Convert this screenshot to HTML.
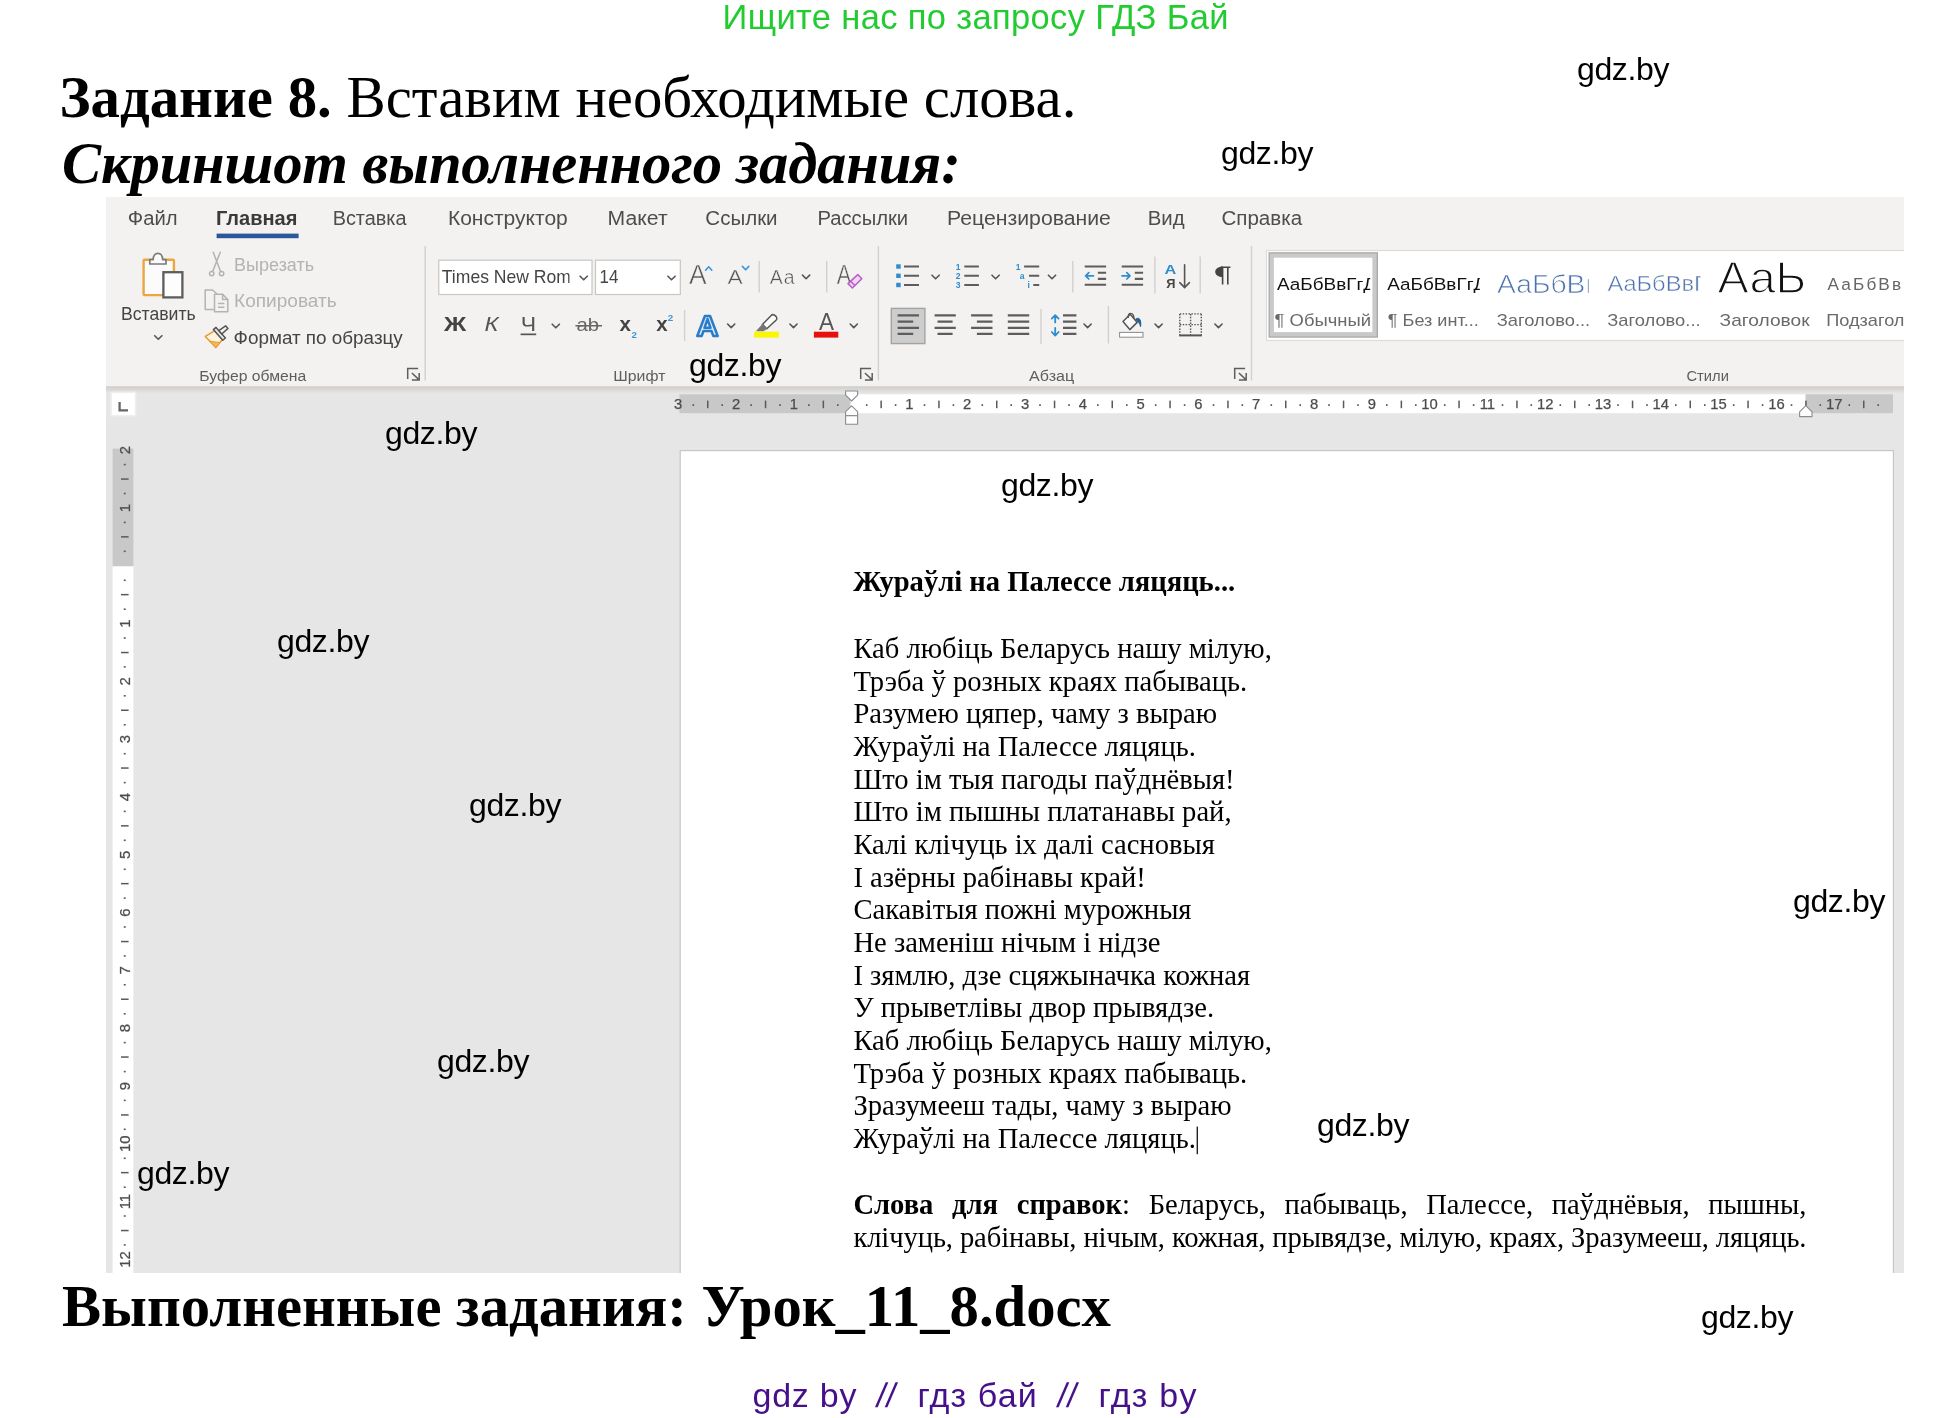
<!DOCTYPE html>
<html lang="ru">
<head>
<meta charset="utf-8">
<title>Задание 8</title>
<style>
html,body{margin:0;padding:0;background:#fff;}
body{width:1953px;height:1418px;position:relative;overflow:hidden;font-family:"Liberation Sans",sans-serif;}
.t{position:absolute;white-space:nowrap;line-height:1;margin:0;padding:0;}
.serif{font-family:"Liberation Serif",serif;}
.sans{font-family:"Liberation Sans",sans-serif;}
.wm{position:absolute;white-space:nowrap;line-height:1;font-family:"Liberation Sans",sans-serif;font-size:32px;letter-spacing:-0.36px;color:#000;margin-top:0.4px;}
#word{position:absolute;left:106px;top:197px;width:1798px;height:1076px;background:#e6e6e6;overflow:hidden;filter:blur(0.6px);}
#wsvg{position:absolute;left:0;top:0;width:1798px;height:1076px;}
#wsvg text{font-family:"Liberation Sans",sans-serif;}
.doc{position:absolute;font-family:"Liberation Serif",serif;font-size:28.6px;line-height:32.75px;color:#000;white-space:nowrap;}
</style>
</head>
<body>
<div id="outer" style="position:absolute;left:0;top:0;width:1953px;height:1418px;opacity:0.999;">
<div class="t sans" id="hdr" style="left:722.5px;top:-0.5px;font-size:34.5px;letter-spacing:0.35px;color:#22cb30;">Ищите нас по запросу ГДЗ Бай</div>
<div class="t serif" id="l1" style="left:59.5px;top:68.5px;font-size:58.8px;color:#000;"><b>Задание 8.</b> Вставим необходимые слова.</div>
<div class="t serif" id="l2" style="left:62px;top:135.3px;font-size:58.67px;letter-spacing:-0.17px;color:#000;font-weight:bold;font-style:italic;">Скриншот выполненного задания:</div>
<div class="t serif" id="l3" style="left:62px;top:1278.2px;font-size:58.67px;color:#000;font-weight:bold;">Выполненные задания: Урок_11_8.docx</div>
<div class="t sans" id="f1" style="left:752.5px;top:1377.7px;font-size:34px;letter-spacing:0.75px;color:#45108a;">gdz by</div>
<div class="t sans" id="f2" style="left:876.6px;top:1377.7px;font-size:34px;letter-spacing:0.3px;transform:skewX(-9deg);color:#45108a;">//</div>
<div class="t sans" id="f3" style="left:917.5px;top:1377.7px;font-size:34px;letter-spacing:1.15px;color:#45108a;">гдз бай</div>
<div class="t sans" id="f4" style="left:1057.7px;top:1377.7px;font-size:34px;letter-spacing:0.3px;transform:skewX(-9deg);color:#45108a;">//</div>
<div class="t sans" id="f5" style="left:1098.5px;top:1377.7px;font-size:34px;letter-spacing:1.28px;color:#45108a;">гдз by</div>
</div><!--outer-->
<div id="word">
<svg id="wsvg" viewBox="106 197 1798 1076" width="1798" height="1076">
<defs>
  <linearGradient id="shd" x1="0" y1="0" x2="0" y2="1"><stop offset="0" stop-color="#cfcdcb"/><stop offset="1" stop-color="#e6e6e6"/></linearGradient>
  <clipPath id="clipfont"><rect x="440" y="262" width="129.6" height="32"/></clipPath>
  <clipPath id="clipgal"><rect x="1266" y="249" width="638" height="93"/></clipPath>
  <path id="chev" d="M-3.6,-1.8 L0,1.8 L3.6,-1.8" fill="none" stroke="#555" stroke-width="1.6" stroke-linecap="round" stroke-linejoin="round"/>
  <g id="launch" fill="none" stroke="#5e5e5e" stroke-width="1.5"><path d="M0.8,11.4 V0.8 H11.2"/><path d="M5,5.4 L12,12 M12.3,5.4 V12.3 H5"/></g>
</defs>
<!-- backgrounds -->
<rect x="106" y="197" width="1798" height="1076" fill="#e6e6e6"/>
<rect x="106" y="197" width="1798" height="189.5" fill="#f3f2f1"/>
<rect x="106" y="386.3" width="1798" height="7" fill="url(#shd)"/>

<!-- tabs -->
<g font-size="20" fill="#4d4d4d">
<text x="127.8" y="225" textLength="49.8" lengthAdjust="spacingAndGlyphs">Файл</text>
<text x="216" y="225" textLength="81.4" lengthAdjust="spacingAndGlyphs" font-weight="bold" fill="#3a3a3a">Главная</text>
<text x="332.7" y="225" textLength="73.8" lengthAdjust="spacingAndGlyphs">Вставка</text>
<text x="447.9" y="225" textLength="119.9" lengthAdjust="spacingAndGlyphs">Конструктор</text>
<text x="607.6" y="225" textLength="60" lengthAdjust="spacingAndGlyphs">Макет</text>
<text x="705.3" y="225" textLength="72.3" lengthAdjust="spacingAndGlyphs">Ссылки</text>
<text x="817.4" y="225" textLength="90.7" lengthAdjust="spacingAndGlyphs">Рассылки</text>
<text x="947.1" y="225" textLength="163.8" lengthAdjust="spacingAndGlyphs">Рецензирование</text>
<text x="1147.7" y="225" textLength="36.9" lengthAdjust="spacingAndGlyphs">Вид</text>
<text x="1221.4" y="225" textLength="80.7" lengthAdjust="spacingAndGlyphs">Справка</text>
</g>
<rect x="216.6" y="233.6" width="82" height="4.6" fill="#2b579a"/>

<!-- group separators -->
<g stroke="#d2d0ce" stroke-width="1.4">
<line x1="425.2" y1="246" x2="425.2" y2="380.5"/>
<line x1="878.4" y1="246" x2="878.4" y2="380.5"/>
<line x1="1251.5" y1="246" x2="1251.5" y2="380.5"/>
<line x1="684.6" y1="310" x2="684.6" y2="341"/>
<line x1="759.2" y1="261" x2="759.2" y2="292.5"/>
<line x1="826.7" y1="261" x2="826.7" y2="292.5"/>
<line x1="1072.8" y1="261" x2="1072.8" y2="292.5"/>
<line x1="1154.9" y1="256.5" x2="1154.9" y2="293.5"/>
<line x1="1200.2" y1="256.5" x2="1200.2" y2="293.5"/>
<line x1="1041" y1="309" x2="1041" y2="344"/>
<line x1="1108.4" y1="306" x2="1108.4" y2="343.5"/>
</g>

<!-- clipboard group text -->
<text x="121" y="319.5" font-size="17.5" fill="#444" textLength="74.7" lengthAdjust="spacingAndGlyphs">Вставить</text>
<use href="#chev" x="158.3" y="337.5"/>
<text x="234.1" y="271.1" font-size="17.5" fill="#b3b3b3" textLength="80" lengthAdjust="spacingAndGlyphs">Вырезать</text>
<text x="234.1" y="307.3" font-size="17.5" fill="#b3b3b3" textLength="102.6" lengthAdjust="spacingAndGlyphs">Копировать</text>
<text x="233.6" y="344.4" font-size="17.5" fill="#444" textLength="169.2" lengthAdjust="spacingAndGlyphs">Формат по образцу</text>
<g font-size="14.7" fill="#5e5e5e">
<text x="199.3" y="380.6" textLength="106.9" lengthAdjust="spacingAndGlyphs">Буфер обмена</text>
<text x="613.3" y="380.6" textLength="52.1" lengthAdjust="spacingAndGlyphs">Шрифт</text>
<text x="1029.1" y="380.6" textLength="45.1" lengthAdjust="spacingAndGlyphs">Абзац</text>
<text x="1686.4" y="380.6" textLength="42.5" lengthAdjust="spacingAndGlyphs">Стили</text>
</g>
<use href="#launch" x="406.9" y="367.6"/>
<use href="#launch" x="859.9" y="367.6"/>
<use href="#launch" x="1233.9" y="367.6"/>

<!-- font boxes -->
<rect x="438.8" y="260.2" width="153.2" height="34.3" fill="#fff" stroke="#c8c6c4" stroke-width="1.2"/>
<rect x="595.5" y="260.2" width="84.8" height="34.3" fill="#fff" stroke="#c8c6c4" stroke-width="1.2"/>
<g clip-path="url(#clipfont)"><text x="441.8" y="283.4" font-size="19" fill="#444" textLength="129" lengthAdjust="spacingAndGlyphs">Times New Rom</text></g>
<text x="599.6" y="283.4" font-size="19" fill="#444" textLength="18.8" lengthAdjust="spacingAndGlyphs">14</text>
<use href="#chev" x="583.7" y="278"/>
<use href="#chev" x="671.5" y="278"/>
<!-- ===== clipboard icons ===== -->
<g>
  <!-- paste -->
  <rect x="143.6" y="259.8" width="30.3" height="35.3" rx="1" fill="#fbfbfb" stroke="#eda541" stroke-width="2.4"/>
  <path d="M149.8,264 V259.6 H153.2 C153.2,251.2 162.6,251.2 162.6,259.6 H166 V264 Z" fill="#fafafa" stroke="#7a7a7a" stroke-width="1.7" stroke-linejoin="round"/>
  <rect x="163.4" y="272.2" width="19" height="25.2" fill="#fdfdfd" stroke="#5d5d5d" stroke-width="2.3"/>
  <!-- scissors -->
  <g fill="none" stroke="#b3b3b3" stroke-width="1.5" stroke-linecap="round">
    <path d="M213.2,252.2 L220.6,271.6 M220.3,252.2 L212.6,271.6"/>
    <circle cx="211.7" cy="273.6" r="2.2"/><circle cx="221.6" cy="273.6" r="2.2"/>
  </g>
  <!-- copy -->
  <g fill="#f3f2f1" stroke="#b3b3b3" stroke-width="1.5" stroke-linejoin="round">
    <path d="M205.2,290 H212.5 L216.5,293.5 V309.4 H205.2 Z"/>
    <path d="M214.5,294.3 H222.6 L227.8,299.6 V311.8 H214.5 Z"/>
    <path d="M222.6,294.3 V299.6 H227.8" fill="none"/>
    <path d="M218,303.6 H224.4 M218,307.2 H224.4" fill="none"/>
  </g>
  <!-- format painter -->
  <g stroke-linejoin="round">
    <path d="M205.3,336.4 L214.6,330.8 L222.4,339.6 L215.8,347.6 Z" fill="#fdf3e1" stroke="#e99a2c" stroke-width="1.5"/>
    <path d="M209.6,341.2 L220,342.6 L215.8,347.6 Z" fill="#f4b95e" stroke="#e99a2c" stroke-width="1"/>
    <path d="M213.4,329.6 L216,327.4 L225.4,338 L222.8,340.2 Z" fill="#e8e8e8" stroke="#555" stroke-width="1.5"/>
    <path d="M218.8,330.6 L225.6,325.8 L228,328.4 L221.8,334 Z" fill="#f3f2f1" stroke="#555" stroke-width="1.5"/>
  </g>
</g>

<!-- ===== font group row 1 ===== -->
<g fill="#555" stroke="#f3f2f1" stroke-width="0.45">
  <text x="689" y="284" font-size="27" textLength="17.6" lengthAdjust="spacingAndGlyphs">A</text>
  <text x="727.5" y="284" font-size="20.5" textLength="15.2" lengthAdjust="spacingAndGlyphs">A</text>
  <text x="769.8" y="284" font-size="19.6" textLength="25.8" lengthAdjust="spacingAndGlyphs" letter-spacing="1">Aa</text>
  <text x="836.8" y="284" font-size="27" textLength="14.6" lengthAdjust="spacingAndGlyphs">A</text>
</g>
<path d="M705.6,270.2 L708.7,266.8 L711.8,270.2" fill="none" stroke="#3a96dd" stroke-width="1.6" stroke-linecap="round" stroke-linejoin="round"/>
<path d="M742.4,266.4 L745.6,269.8 L748.8,266.4" fill="none" stroke="#3a96dd" stroke-width="1.6" stroke-linecap="round" stroke-linejoin="round"/>
<use href="#chev" x="806.1" y="276.9"/>
<path d="M857.8,274.6 L861.8,278.8 L852.4,288 L848,283.6 Z" fill="#f1d5f7" stroke="#b65fc7" stroke-width="1.5" stroke-linejoin="round"/>
<path d="M850.6,281.2 L854.9,285.5" stroke="#b65fc7" stroke-width="1.5"/>

<!-- ===== font group row 2 ===== -->
<g fill="#444">
  <text x="444" y="331" font-size="20.5" font-weight="bold" textLength="22.2" lengthAdjust="spacingAndGlyphs">Ж</text>
  <text x="484.6" y="331" font-size="20.5" font-style="italic" textLength="14" lengthAdjust="spacingAndGlyphs" fill="#555">К</text>
  <text x="520.8" y="331" font-size="20.5" textLength="15.4" lengthAdjust="spacingAndGlyphs" fill="#555">Ч</text>
  <text x="576.4" y="331" font-size="19" textLength="22.6" lengthAdjust="spacingAndGlyphs" fill="#666">ab</text>
  <text x="619.6" y="331" font-size="20" font-weight="bold" textLength="11.4" lengthAdjust="spacingAndGlyphs">x</text>
  <text x="656.2" y="331" font-size="20" font-weight="bold" textLength="11.4" lengthAdjust="spacingAndGlyphs">x</text>
  <text x="631.4" y="337.6" font-size="9.8" font-weight="bold" fill="#3a96dd">2</text>
  <text x="667.8" y="320.6" font-size="9.8" font-weight="bold" fill="#3a96dd">2</text>
</g>
<rect x="520.6" y="333.5" width="15.6" height="1.7" fill="#555"/>
<rect x="575.4" y="325" width="26.6" height="1.5" fill="#666"/>
<use href="#chev" x="555.8" y="326"/>
<!-- text effects A -->
<text x="696.6" y="335.6" font-size="29.5" font-weight="bold" fill="#dcebf9" stroke="#2a7bc8" stroke-width="2.4" textLength="22" lengthAdjust="spacingAndGlyphs" stroke-linejoin="round">A</text>
<use href="#chev" x="731.2" y="325.8"/>
<!-- highlighter -->
<g stroke-linejoin="round">
  <path d="M762.4,324.4 L771.2,315.4 C773.6,313 778.6,317.6 776.2,320 L766.8,328.8 Z" fill="#fcfcfc" stroke="#555" stroke-width="1.5"/>
  <path d="M762.4,324.4 L766.8,328.8 L763.4,330.9 L756.6,330.9 Z" fill="#767676" stroke="#767676" stroke-width="0.8"/>
</g>
<rect x="754.1" y="331.7" width="24.8" height="5.9" fill="#faf500"/>
<use href="#chev" x="793.5" y="325.8"/>
<!-- font color -->
<text x="819" y="330.2" font-size="23.8" fill="#555" textLength="15" lengthAdjust="spacingAndGlyphs">A</text>
<rect x="813.9" y="331.7" width="24.4" height="5.9" fill="#e80f0f"/>
<use href="#chev" x="853.8" y="325.8"/>

<!-- ===== paragraph row 1 ===== -->
<g stroke="#5f5d5b" stroke-width="2.1">
  <path d="M904,266.5 H919 M904,275.8 H919 M904,285 H919"/>
  <path d="M964.3,266.5 H978.9 M964.3,275.8 H978.9 M964.3,285 H978.9"/>
  <path d="M1024.1,266.5 H1039.2 M1029,275.8 H1039.2 M1033.3,285 H1039.2"/>
  <path d="M1084.7,266.5 H1106.1 M1097.9,272.7 H1106.1 M1097.9,278.9 H1106.1 M1084.7,284.8 H1106.1"/>
  <path d="M1121.7,266.5 H1143.1 M1134.8,272.7 H1143.1 M1134.8,278.9 H1143.1 M1121.7,284.8 H1143.1"/>
</g>
<g fill="#2f8ccd">
  <rect x="896.2" y="264.3" width="4.5" height="4.4"/><rect x="896.2" y="273.6" width="4.5" height="4.4"/><rect x="896.2" y="282.8" width="4.5" height="4.4"/>
</g>
<g fill="#2f8ccd" font-weight="bold" font-size="8.6">
  <text x="955.8" y="269.6">1</text><text x="955.8" y="278.9">2</text><text x="955.8" y="288.2">3</text>
  <text x="1015.8" y="269.6">1</text><text x="1019.8" y="278.9">a</text><text x="1027.6" y="288.2">i</text>
</g>
<use href="#chev" x="935.6" y="277"/>
<use href="#chev" x="995.6" y="277"/>
<use href="#chev" x="1052" y="277"/>
<g fill="none" stroke="#2f8ccd" stroke-width="1.7" stroke-linecap="round" stroke-linejoin="round">
  <path d="M1093.4,275.8 H1085.6 M1088.8,272.6 L1085.6,275.8 L1088.8,279"/>
  <path d="M1122,275.8 H1130 M1126.8,272.6 L1130,275.8 L1126.8,279"/>
</g>
<!-- sort -->
<text x="1164.4" y="274.3" font-size="13.6" font-weight="bold" fill="#2f8ccd" textLength="11.8" lengthAdjust="spacingAndGlyphs">A</text>
<text x="1166.2" y="288.4" font-size="12.8" font-weight="bold" fill="#444" textLength="9.2" lengthAdjust="spacingAndGlyphs">Я</text>
<path d="M1184.6,264.8 V287.4 M1179.8,282.6 L1184.6,287.6 L1189.4,282.6" fill="none" stroke="#555" stroke-width="1.6" stroke-linecap="round" stroke-linejoin="round"/>
<!-- pilcrow -->
<path d="M1223,266.6 C1212.6,266.6 1212.6,277.2 1223,277.2 Z" fill="#444"/>
<path d="M1222.6,266.6 V284.5 M1227.8,266.6 V284.5 M1221,267.3 H1230.4" fill="none" stroke="#444" stroke-width="1.6"/>

<!-- ===== paragraph row 2 ===== -->
<rect x="891.3" y="308.4" width="33.6" height="35.2" fill="#cdcdcd" stroke="#a3a3a3" stroke-width="1.4"/>
<g stroke="#5f5d5b" stroke-width="2.2">
  <path d="M897.6,315.4 H919 M897.6,321.7 H913.2 M897.6,327.8 H919 M897.6,333.9 H913.2"/>
  <path d="M934.6,315.4 H955.8 M937.5,321.7 H952.6 M934.6,327.8 H955.8 M937.5,333.9 H952.6"/>
  <path d="M971.1,315.4 H992.5 M976.9,321.7 H992.5 M971.1,327.8 H992.5 M976.9,333.9 H992.5"/>
  <path d="M1007.8,315.4 H1029.2 M1007.8,321.7 H1029.2 M1007.8,327.8 H1029.2 M1007.8,333.9 H1029.2"/>
  <path d="M1063,315.4 H1076.4 M1063,321.7 H1076.4 M1063,327.8 H1076.4 M1063,333.9 H1076.4"/>
</g>
<g fill="none" stroke="#2f8ccd" stroke-width="1.8" stroke-linecap="round" stroke-linejoin="round">
  <path d="M1055.2,315.4 V322.4 M1051.8,318.6 L1055.2,315.2 L1058.6,318.6"/>
  <path d="M1055.2,328 V335.4 M1051.8,332 L1055.2,335.6 L1058.6,332"/>
</g>
<use href="#chev" x="1087.6" y="325.8"/>
<!-- shading -->
<g stroke-linejoin="round">
  <path d="M1130.2,314.2 L1137.2,322.4 L1129.8,329.6 L1123,321.6 Z" fill="#fafafa" stroke="#555" stroke-width="1.5"/>
  <path d="M1128.2,318 C1127.6,311.8 1133.6,311.6 1134,318.6" fill="none" stroke="#555" stroke-width="1.4"/>
  <path d="M1135.6,319.2 C1139.6,316.4 1141.4,320.4 1140.6,326.6 C1139.6,323 1138.2,321.6 1135.6,319.2 Z" fill="#1f5f96" stroke="#1f5f96" stroke-width="1"/>
</g>
<rect x="1119.6" y="332.4" width="23.4" height="4.8" fill="#fff" stroke="#8a8a8a" stroke-width="1"/>
<use href="#chev" x="1158.6" y="325.8"/>
<!-- borders -->
<g fill="none" stroke="#555" stroke-width="1.4" stroke-dasharray="1.5 1.4">
  <path d="M1179.8,313.9 H1201.4 M1179.8,313.9 V335 M1201.3,313.9 V335 M1190.6,313.9 V335 M1179.8,324.6 H1201.4"/>
</g>
<path d="M1179.1,335.4 H1201.9" stroke="#555" stroke-width="2"/>
<use href="#chev" x="1218.5" y="325.8"/>
<!-- ===== styles gallery ===== -->
<rect x="1266.5" y="250.5" width="640" height="90" fill="#fff" stroke="#dcdcdc" stroke-width="1.2"/>
<rect x="1268.5" y="252.2" width="109.5" height="85.5" fill="#a9a9a9"/>
<rect x="1269.8" y="253.5" width="106.9" height="82.9" fill="#c9c9c9"/>
<rect x="1273.9" y="257.7" width="98.5" height="74.4" fill="#fff"/>
<g clip-path="url(#clipgal)">
  <clipPath id="cs1"><rect x="1272" y="260" width="98.2" height="40"/></clipPath>
  <clipPath id="cs2"><rect x="1384" y="260" width="95.8" height="40"/></clipPath>
  <clipPath id="cs3"><rect x="1494" y="255" width="94.6" height="45"/></clipPath>
  <clipPath id="cs4"><rect x="1604" y="255" width="96.4" height="45"/></clipPath>
  <g clip-path="url(#cs1)"><text x="1277" y="289.8" font-size="17.4" fill="#111" textLength="110.2" lengthAdjust="spacingAndGlyphs">АаБбВвГгДд</text></g>
  <g clip-path="url(#cs2)"><text x="1387.2" y="289.8" font-size="17.4" fill="#111" textLength="110.2" lengthAdjust="spacingAndGlyphs">АаБбВвГгДд</text></g>
  <g clip-path="url(#cs3)"><text x="1497" y="292.7" font-size="26.4" fill="#4d72ad" stroke="#fff" stroke-width="0.7" textLength="103.5" lengthAdjust="spacingAndGlyphs">АаБбВв</text></g>
  <g clip-path="url(#cs4)"><text x="1607.4" y="290.6" font-size="22" fill="#4d72ad" stroke="#fff" stroke-width="0.5" textLength="108" lengthAdjust="spacingAndGlyphs">АаБбВвГг</text></g>
  <text x="1717.6" y="293.2" font-size="43.6" fill="#111" stroke="#fff" stroke-width="1.3" textLength="88.6" lengthAdjust="spacingAndGlyphs">АаЬ</text>
  <text x="1827.6" y="289.8" font-size="17.2" fill="#666" letter-spacing="2.1">АаБбВвГг</text>
  <g font-size="16.6" fill="#6a6a6a">
    <text x="1274.6" y="326.2" textLength="96.4" lengthAdjust="spacingAndGlyphs">¶ Обычный</text>
    <text x="1387.8" y="326.2" textLength="91" lengthAdjust="spacingAndGlyphs">¶ Без инт...</text>
    <text x="1496.8" y="326.2" textLength="93.4" lengthAdjust="spacingAndGlyphs">Заголово...</text>
    <text x="1607.2" y="326.2" textLength="93.4" lengthAdjust="spacingAndGlyphs">Заголово...</text>
    <text x="1719.6" y="326.2" textLength="90" lengthAdjust="spacingAndGlyphs">Заголовок</text>
    <text x="1826.2" y="326.2" textLength="116" lengthAdjust="spacingAndGlyphs">Подзаголовок</text>
  </g>
</g>
<!-- ===== horizontal ruler ===== -->
<rect x="679.4" y="394.3" width="171.2" height="18.9" fill="#c8c8c8"/>
<rect x="850.6" y="394.3" width="955.0" height="18.9" fill="#fff"/>
<rect x="1805.6" y="394.3" width="87.4" height="18.9" fill="#c8c8c8"/>
<g fill="#5a5a5a">
<rect x="707.0" y="400.6" width="1.5" height="7.6"/>
<rect x="764.8" y="400.6" width="1.5" height="7.6"/>
<rect x="822.6" y="400.6" width="1.5" height="7.6"/>
<rect x="880.4" y="400.6" width="1.5" height="7.6"/>
<rect x="938.2" y="400.6" width="1.5" height="7.6"/>
<rect x="996.0" y="400.6" width="1.5" height="7.6"/>
<rect x="1053.8" y="400.6" width="1.5" height="7.6"/>
<rect x="1111.5" y="400.6" width="1.5" height="7.6"/>
<rect x="1169.3" y="400.6" width="1.5" height="7.6"/>
<rect x="1227.2" y="400.6" width="1.5" height="7.6"/>
<rect x="1285.0" y="400.6" width="1.5" height="7.6"/>
<rect x="1342.8" y="400.6" width="1.5" height="7.6"/>
<rect x="1400.6" y="400.6" width="1.5" height="7.6"/>
<rect x="1458.3" y="400.6" width="1.5" height="7.6"/>
<rect x="1516.2" y="400.6" width="1.5" height="7.6"/>
<rect x="1574.0" y="400.6" width="1.5" height="7.6"/>
<rect x="1631.8" y="400.6" width="1.5" height="7.6"/>
<rect x="1689.5" y="400.6" width="1.5" height="7.6"/>
<rect x="1747.3" y="400.6" width="1.5" height="7.6"/>
<rect x="1805.2" y="400.6" width="1.5" height="7.6"/>
<rect x="1863.0" y="400.6" width="1.5" height="7.6"/>
<rect x="692.5" y="404.2" width="1.6" height="1.8"/>
<rect x="721.4" y="404.2" width="1.6" height="1.8"/>
<rect x="750.3" y="404.2" width="1.6" height="1.8"/>
<rect x="779.2" y="404.2" width="1.6" height="1.8"/>
<rect x="808.1" y="404.2" width="1.6" height="1.8"/>
<rect x="837.0" y="404.2" width="1.6" height="1.8"/>
<rect x="865.9" y="404.2" width="1.6" height="1.8"/>
<rect x="894.8" y="404.2" width="1.6" height="1.8"/>
<rect x="923.7" y="404.2" width="1.6" height="1.8"/>
<rect x="952.6" y="404.2" width="1.6" height="1.8"/>
<rect x="981.5" y="404.2" width="1.6" height="1.8"/>
<rect x="1010.4" y="404.2" width="1.6" height="1.8"/>
<rect x="1039.2" y="404.2" width="1.6" height="1.8"/>
<rect x="1068.2" y="404.2" width="1.6" height="1.8"/>
<rect x="1097.0" y="404.2" width="1.6" height="1.8"/>
<rect x="1126.0" y="404.2" width="1.6" height="1.8"/>
<rect x="1154.9" y="404.2" width="1.6" height="1.8"/>
<rect x="1183.8" y="404.2" width="1.6" height="1.8"/>
<rect x="1212.7" y="404.2" width="1.6" height="1.8"/>
<rect x="1241.5" y="404.2" width="1.6" height="1.8"/>
<rect x="1270.5" y="404.2" width="1.6" height="1.8"/>
<rect x="1299.4" y="404.2" width="1.6" height="1.8"/>
<rect x="1328.2" y="404.2" width="1.6" height="1.8"/>
<rect x="1357.2" y="404.2" width="1.6" height="1.8"/>
<rect x="1386.0" y="404.2" width="1.6" height="1.8"/>
<rect x="1415.0" y="404.2" width="1.6" height="1.8"/>
<rect x="1443.9" y="404.2" width="1.6" height="1.8"/>
<rect x="1472.8" y="404.2" width="1.6" height="1.8"/>
<rect x="1501.7" y="404.2" width="1.6" height="1.8"/>
<rect x="1530.5" y="404.2" width="1.6" height="1.8"/>
<rect x="1559.5" y="404.2" width="1.6" height="1.8"/>
<rect x="1588.4" y="404.2" width="1.6" height="1.8"/>
<rect x="1617.2" y="404.2" width="1.6" height="1.8"/>
<rect x="1646.2" y="404.2" width="1.6" height="1.8"/>
<rect x="1675.0" y="404.2" width="1.6" height="1.8"/>
<rect x="1704.0" y="404.2" width="1.6" height="1.8"/>
<rect x="1732.9" y="404.2" width="1.6" height="1.8"/>
<rect x="1761.8" y="404.2" width="1.6" height="1.8"/>
<rect x="1790.7" y="404.2" width="1.6" height="1.8"/>
<rect x="1819.5" y="404.2" width="1.6" height="1.8"/>
<rect x="1848.5" y="404.2" width="1.6" height="1.8"/>
<rect x="1877.4" y="404.2" width="1.6" height="1.8"/>
</g>
<g font-size="14.8" fill="#4c4c4c" stroke="#4c4c4c" stroke-width="0.25" text-anchor="middle">
<text x="678.2" y="409">3</text>
<text x="736.0" y="409">2</text>
<text x="793.8" y="409">1</text>
<text x="909.4" y="409">1</text>
<text x="967.2" y="409">2</text>
<text x="1025.0" y="409">3</text>
<text x="1082.8" y="409">4</text>
<text x="1140.6" y="409">5</text>
<text x="1198.4" y="409">6</text>
<text x="1256.2" y="409">7</text>
<text x="1314.0" y="409">8</text>
<text x="1371.8" y="409">9</text>
<text x="1429.6" y="409">10</text>
<text x="1487.4" y="409">11</text>
<text x="1545.2" y="409">12</text>
<text x="1603.0" y="409">13</text>
<text x="1660.8" y="409">14</text>
<text x="1718.6" y="409">15</text>
<text x="1776.4" y="409">16</text>
<text x="1834.2" y="409">17</text>
</g>
<g fill="#fdfdfd" stroke="#8c8c8c" stroke-width="1.1" stroke-linejoin="round">
<path d="M845.6,391 H857.6 V395.2 L851.6,401 L845.6,395.2 Z"/>
<path d="M845.6,415.6 V411.6 L851.6,405.8 L857.6,411.6 V415.6 Z"/>
<rect x="845.6" y="415.8" width="12" height="8.4"/>
<path d="M1799.6,416.6 V411.8 L1805.8,405.6 L1812,411.8 V416.6 Z"/>
</g>
<!-- tab selector -->
<rect x="110.4" y="391.6" width="26" height="25" fill="#efefef"/>
<rect x="112" y="393.2" width="22.8" height="21.8" fill="#fff"/>
<path d="M119.6,402 V410.4 H128" fill="none" stroke="#666" stroke-width="2.3"/>
<!-- ===== vertical ruler ===== -->
<rect x="112.6" y="448.6" width="20.8" height="117.8" fill="#c8c8c8"/>
<rect x="112.6" y="566.4" width="20.8" height="708.2" fill="#fff"/>
<g fill="#5a5a5a">
<rect x="121" y="478.3" width="7.6" height="1.5"/>
<rect x="121" y="536.1" width="7.6" height="1.5"/>
<rect x="121" y="593.9" width="7.6" height="1.5"/>
<rect x="121" y="651.8" width="7.6" height="1.5"/>
<rect x="121" y="709.5" width="7.6" height="1.5"/>
<rect x="121" y="767.3" width="7.6" height="1.5"/>
<rect x="121" y="825.1" width="7.6" height="1.5"/>
<rect x="121" y="882.9" width="7.6" height="1.5"/>
<rect x="121" y="940.8" width="7.6" height="1.5"/>
<rect x="121" y="998.5" width="7.6" height="1.5"/>
<rect x="121" y="1056.3" width="7.6" height="1.5"/>
<rect x="121" y="1114.2" width="7.6" height="1.5"/>
<rect x="121" y="1171.9" width="7.6" height="1.5"/>
<rect x="121" y="1229.8" width="7.6" height="1.5"/>
<rect x="123.8" y="463.8" width="1.9" height="1.6"/>
<rect x="123.8" y="492.7" width="1.9" height="1.6"/>
<rect x="123.8" y="521.6" width="1.9" height="1.6"/>
<rect x="123.8" y="550.5" width="1.9" height="1.6"/>
<rect x="123.8" y="579.5" width="1.9" height="1.6"/>
<rect x="123.8" y="608.4" width="1.9" height="1.6"/>
<rect x="123.8" y="637.2" width="1.9" height="1.6"/>
<rect x="123.8" y="666.1" width="1.9" height="1.6"/>
<rect x="123.8" y="695.0" width="1.9" height="1.6"/>
<rect x="123.8" y="724.0" width="1.9" height="1.6"/>
<rect x="123.8" y="752.9" width="1.9" height="1.6"/>
<rect x="123.8" y="781.8" width="1.9" height="1.6"/>
<rect x="123.8" y="810.6" width="1.9" height="1.6"/>
<rect x="123.8" y="839.5" width="1.9" height="1.6"/>
<rect x="123.8" y="868.5" width="1.9" height="1.6"/>
<rect x="123.8" y="897.3" width="1.9" height="1.6"/>
<rect x="123.8" y="926.2" width="1.9" height="1.6"/>
<rect x="123.8" y="955.1" width="1.9" height="1.6"/>
<rect x="123.8" y="984.0" width="1.9" height="1.6"/>
<rect x="123.8" y="1013.0" width="1.9" height="1.6"/>
<rect x="123.8" y="1041.8" width="1.9" height="1.6"/>
<rect x="123.8" y="1070.8" width="1.9" height="1.6"/>
<rect x="123.8" y="1099.6" width="1.9" height="1.6"/>
<rect x="123.8" y="1128.5" width="1.9" height="1.6"/>
<rect x="123.8" y="1157.5" width="1.9" height="1.6"/>
<rect x="123.8" y="1186.4" width="1.9" height="1.6"/>
<rect x="123.8" y="1215.2" width="1.9" height="1.6"/>
<rect x="123.8" y="1244.1" width="1.9" height="1.6"/>
<rect x="123.8" y="1273.0" width="1.9" height="1.6"/>
</g>
<g font-size="14.9" fill="#4c4c4c" stroke="#4c4c4c" stroke-width="0.25" text-anchor="middle">
<text transform="translate(129.8,450.2) rotate(-90)">2</text>
<text transform="translate(129.8,508.0) rotate(-90)">1</text>
<text transform="translate(129.8,623.6) rotate(-90)">1</text>
<text transform="translate(129.8,681.4) rotate(-90)">2</text>
<text transform="translate(129.8,739.2) rotate(-90)">3</text>
<text transform="translate(129.8,797.0) rotate(-90)">4</text>
<text transform="translate(129.8,854.8) rotate(-90)">5</text>
<text transform="translate(129.8,912.6) rotate(-90)">6</text>
<text transform="translate(129.8,970.4) rotate(-90)">7</text>
<text transform="translate(129.8,1028.2) rotate(-90)">8</text>
<text transform="translate(129.8,1086.0) rotate(-90)">9</text>
<text transform="translate(129.8,1143.8) rotate(-90)">10</text>
<text transform="translate(129.8,1201.6) rotate(-90)">11</text>
<text transform="translate(129.8,1259.4) rotate(-90)">12</text>
</g>
<!-- ===== document page ===== -->
<rect x="680.2" y="450.6" width="1213.2" height="830" fill="#fff" stroke="#c6c6c6" stroke-width="1.2"/>
<rect x="1196.6" y="1126.6" width="1.4" height="27.6" fill="#222"/>
</svg>
<div id="doclayer" style="position:absolute;left:-106px;top:-197px;width:1953px;height:1418px;">
<!-- document text -->
<div class="doc" id="dt" style="left:853.3px;top:566.4px;font-weight:bold;">Жураўлі на Палессе ляцяць...</div>
<div class="doc" id="dp" style="left:853.4px;top:633px;line-height:32.66px;">Каб любіць Беларусь нашу мілую,<br>Трэба ў розных краях пабываць.<br>Разумею цяпер, чаму з выраю<br>Жураўлі на Палессе ляцяць.<br>Што ім тыя пагоды паўднёвыя!<br>Што ім пышны платанавы рай,<br>Калі клічуць іх далі сасновыя<br>І азёрны рабінавы край!<br>Сакавітыя пожні мурожныя<br>Не заменіш нічым і нідзе<br>І зямлю, дзе сцяжыначка кожная<br>У прыветлівы двор прывядзе.<br>Каб любіць Беларусь нашу мілую,<br>Трэба ў розных краях пабываць.<br>Зразумееш тады, чаму з выраю<br>Жураўлі на Палессе ляцяць.</div>
<div class="doc" id="ds" style="left:853.4px;top:1189.2px;width:953px;white-space:normal;text-align:justify;text-align-last:justify;"><b>Слова для справок</b>: Беларусь, пабываць, Палессе, паўднёвыя, пышны,</div>
<div class="doc" id="ds2" style="left:853.4px;top:1222.1px;letter-spacing:-0.1px;">клічуць, рабінавы, нічым, кожная, прывядзе, мілую, краях, Зразумееш, ляцяць.</div>
</div>
</div><!--word-->
<!-- watermarks -->
<div id="wms" style="position:absolute;left:0;top:0;width:1953px;height:1418px;opacity:0.999;">
<div class="wm" id="w1" style="left:1577px;top:52.3px;">gdz.by</div>
<div class="wm" id="w2" style="left:1221px;top:136.3px;">gdz.by</div>
<div class="wm" id="w3" style="left:689px;top:348.3px;">gdz.by</div>
<div class="wm" id="w4" style="left:385px;top:416.3px;">gdz.by</div>
<div class="wm" id="w5" style="left:1001px;top:468.3px;">gdz.by</div>
<div class="wm" id="w6" style="left:277px;top:624.3px;">gdz.by</div>
<div class="wm" id="w7" style="left:469px;top:788.3px;">gdz.by</div>
<div class="wm" id="w8" style="left:1793px;top:884.3px;">gdz.by</div>
<div class="wm" id="w9" style="left:437px;top:1044.3px;">gdz.by</div>
<div class="wm" id="w10" style="left:1317px;top:1108.3px;">gdz.by</div>
<div class="wm" id="w11" style="left:137px;top:1156.3px;">gdz.by</div>
<div class="wm" id="w12" style="left:1701px;top:1300.3px;">gdz.by</div>
</div>
</body>
</html>
